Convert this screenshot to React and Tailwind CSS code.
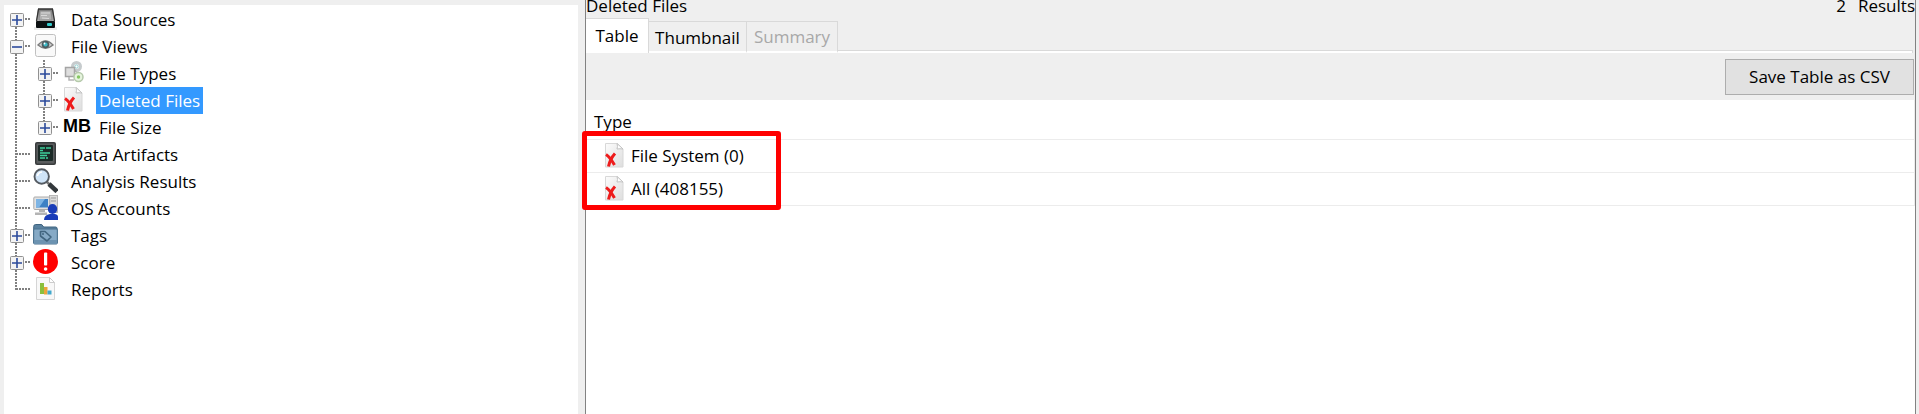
const svgProps = { width: 25, height: 25, viewBox: '0 0 25 25', 'aria-hidden': true, className: 'block shrink-0' };

function DriveIcon() {
  return (
    <svg {...svgProps}>
      <defs>
        <linearGradient id="drive" x1="0" y1="0" x2="0" y2="1">
          <stop offset="0" stopColor="#777" />
          <stop offset="1" stopColor="#b4b4b4" />
        </linearGradient>
      </defs>
      <rect x="1" y="21" width="23" height="3" fill="#ececec" />
      <path d="M5 3h15l2 13H3z" fill="url(#drive)" />
      <path d="M7 5h11l1 9H6z" fill="#b0b0b0" stroke="#808080" strokeWidth=".6" />
      <path d="M8 7h9M8 9.500h6M9 12l7 .5" stroke="#dedede" strokeWidth=".9" fill="none" />
      <path d="M5.500 3L3.500 15M19.500 3l2 12M5 3h15" stroke="#333" strokeWidth="1.300" fill="none" />
      <rect x="3" y="15" width="19" height="7" rx="1" fill="#0c1012" />
      <rect x="14" y="17" width="5" height="3" rx="1" fill="#3cc" />
    </svg>
  );
}

function EyeIcon() {
  return (
    <svg {...svgProps}>
      <rect x="2.500" y="1.500" width="20" height="22" rx="2" fill="#f9f9f9" stroke="#c0c0c0" />
      <path d="M5 12Q12.500 4 20 12Q12.500 18.500 5 12z" fill="#d0d0d0" stroke="#7c7c7c" strokeWidth="1.400" />
      <circle cx="12.500" cy="11.500" r="3.800" fill="#4d5c60" />
      <circle cx="12.500" cy="11.500" r="2.100" fill="#3bb8c6" />
      <circle cx="11.500" cy="10.500" r=".9" fill="#fff" />
    </svg>
  );
}

function TypesIcon() {
  return (
    <svg {...svgProps}>
      <circle cx="15.500" cy="6.500" r="4" fill="#f2f5f6" stroke="#c6cbcd" strokeWidth="3" />
      <circle cx="15.500" cy="6.500" r="1.600" fill="#fff" stroke="#8cc" strokeWidth=".9" />
      <path d="M12.500 9.500L18 14" stroke="#b5b5b5" strokeWidth="1.500" />
      <rect x="4.500" y="7.500" width="9" height="9" fill="#dedede" stroke="#a5a5a5" strokeWidth="1.500" />
      <path d="M8 17v3h5" fill="none" stroke="#b5b5b5" strokeWidth="1.500" />
      <circle cx="17.500" cy="17" r="4.500" fill="#e6f4de" stroke="#b5c9ab" strokeWidth="1.500" />
      <circle cx="17.500" cy="17" r="1.700" fill="#86c763" />
    </svg>
  );
}

function DeletedIcon() {
  return (
    <svg {...svgProps}>
      <defs>
        <linearGradient id="page" x1="0" y1="0" x2="1" y2="1">
          <stop offset="0" stopColor="#fcfcfc" />
          <stop offset="1" stopColor="#dedede" />
        </linearGradient>
      </defs>
      <path d="M3.500 .5h12l5.500 5.500v18h-17.500z" fill="url(#page)" stroke="#d8d8d8" />
      <path d="M15 .5q1 3 0 5.500q3-.5 6 0z" fill="#fff" stroke="#c2c2c2" />
      <path d="M4 11.500Q8 14 12.500 22" fill="none" stroke="#ee1c1c" strokeWidth="3" />
      <path d="M13 10.500Q8 16 6.500 23.500" fill="none" stroke="#ee1c1c" strokeWidth="3" />
    </svg>
  );
}

function ArtifactIcon() {
  return (
    <svg {...svgProps}>
      <rect x="2" y="1" width="21" height="23" rx="2" fill="#3a3d3e" />
      <rect x="3.500" y="2.500" width="18" height="20" rx="1" fill="#5a5d5e" />
      <rect x="5" y="4" width="15" height="16" rx="1" fill="#1b2a27" />
      <path d="M7 7h5M13 7h5M7 9.500h3M7 12h10M7 14.500h7M7 17h5M13 17h2" stroke="#3fcf9c" strokeWidth="1.600" />
    </svg>
  );
}

function SearchIcon() {
  return (
    <svg {...svgProps}>
      <path d="M13.500 13.500l3 3" stroke="#777" strokeWidth="2.500" />
      <path d="M16 16l8 7.500" stroke="#33383c" strokeWidth="4.500" />
      <circle cx="8.700" cy="8.500" r="7.200" fill="#cfe4f8" stroke="#555b62" strokeWidth="1.900" />
      <path d="M4.500 8Q5 4.500 9 4" stroke="#fff" strokeWidth="1.600" fill="none" />
    </svg>
  );
}

function AccountIcon() {
  return (
    <svg {...svgProps}>
      <rect x="16.500" y=".5" width="8" height="17" fill="#dcdcdc" stroke="#aaa" strokeWidth=".8" />
      <path d="M18 3h5M18 6h5" stroke="#999" />
      <rect x=".8" y="2" width="16" height="12.500" rx="1" fill="#e2e2e2" stroke="#aaa" />
      <rect x="3" y="4" width="12" height="8.500" fill="#3c80c4" />
      <path d="M3 4h9l-6 8.500H3z" fill="#7db4e4" />
      <path d="M6 15h6v2H6zM2 17.500h12v2.500H2z" fill="#b4b4b4" />
      <ellipse cx="19.500" cy="14" rx="4.700" ry="5" fill="#1a3db8" />
      <path d="M11 25q0-5 6-6h5q3 .5 3 3v3z" fill="#1a3db8" />
    </svg>
  );
}

function TagIcon() {
  return (
    <svg {...svgProps}>
      <path d="M.7 4.500q0-2 2-2h6l2 2.500h12q1.500 0 1.500 2v14H.7z" fill="#5a819f" stroke="#3f6480" />
      <rect x=".7" y="7" width="23.600" height="15" rx="1" fill="#86aac6" stroke="#4a718e" />
      <path d="M1 18h23v4H1z" fill="#6c93b1" />
      <path d="M7.500 9.500h4.500l6 5.500-4 4-6.500-5z" fill="none" stroke="#41657f" strokeWidth="1.600" strokeLinejoin="round" />
      <circle cx="10" cy="12" r="1" fill="#41657f" />
    </svg>
  );
}

function ScoreIcon() {
  return (
    <svg {...svgProps}>
      <circle cx="12.500" cy="12.500" r="12.500" fill="#f00" />
      <rect x="11" y="3.500" width="3.200" height="13" rx=".8" fill="#fff" />
      <circle cx="12.600" cy="20" r="1.800" fill="#fff" />
    </svg>
  );
}

function ReportIcon() {
  return (
    <svg {...svgProps}>
      <path d="M3.500 1.500h13l5 5v17h-18z" fill="#f8f8f8" stroke="#d5d5d5" />
      <path d="M16.500 1.500v5h5z" fill="#fff" stroke="#ccc" />
      <rect x="7" y="7" width="4" height="11" fill="#8bbf3c" />
      <rect x="11" y="11" width="3.500" height="7.500" fill="#eba43a" />
      <rect x="14.500" y="14.500" width="4" height="4" fill="#42a8cc" />
    </svg>
  );
}

function SizeIcon() {
  return <span className="pl-[2px] font-['Liberation_Sans',sans-serif] text-[18px] font-bold leading-6">MB</span>;
}

/* Dotted branch lines; `up`, `down` and `arm` choose the segments. */
function Branch({ up, down, arm }) {
  const line = { stroke: '#808080', strokeWidth: 2, strokeDasharray: '2 1' };
  return (
    <svg width="28" height="27" viewBox="0 0 28 27" aria-hidden className="col-start-1 row-start-1 block">
      {up && <path d="M12 0V14" {...line} />}
      {down && <path d="M12 15V27" {...line} />}
      {arm && <path d="M12 13H26" {...line} />}
    </svg>
  );
}

function Gutter({ up, down, arm = true, toggle, label }) {
  return (
    <span className="grid w-7 shrink-0 items-center">
      <Branch up={up} down={down} arm={arm} />
      {toggle && (
        <button
          type="button"
          aria-label={`${toggle === 'minus' ? 'Collapse' : 'Expand'} ${label}`}
          className="z-10 col-start-1 row-start-1 ml-[6px] size-[14px]"
        >
          <svg width="14" height="14" viewBox="0 0 14 14" aria-hidden className="block">
            <rect x=".5" y=".5" width="13" height="13" rx="1" fill="#f3f3f3" stroke="#919191" />
            <path d={toggle === 'minus' ? 'M2 7h10' : 'M2 7h10M7 2v10'} stroke="#2b4a9b" strokeWidth="1.600" />
          </svg>
        </button>
      )}
    </span>
  );
}

const items = [
  { label: 'Data Sources', Icon: DriveIcon, toggle: 'plus', down: true },
  {
    label: 'File Views', Icon: EyeIcon, toggle: 'minus', up: true, down: true,
    children: [
      { label: 'File Types', Icon: TypesIcon, toggle: 'plus', up: true, down: true },
      { label: 'Deleted Files', Icon: DeletedIcon, toggle: 'plus', up: true, down: true, selected: true },
      { label: 'File Size', Icon: SizeIcon, toggle: 'plus', up: true },
    ],
  },
  { label: 'Data Artifacts', Icon: ArtifactIcon, up: true, down: true },
  { label: 'Analysis Results', Icon: SearchIcon, up: true, down: true },
  { label: 'OS Accounts', Icon: AccountIcon, up: true, down: true },
  { label: 'Tags', Icon: TagIcon, toggle: 'plus', up: true, down: true },
  { label: 'Score', Icon: ScoreIcon, toggle: 'plus', up: true, down: true },
  { label: 'Reports', Icon: ReportIcon, up: true },
];

function TreeItem({ item, nested }) {
  const { label, Icon, toggle, up, down, selected, children } = item;
  return (
    <li>
      <div className="flex h-[27px] items-center">
        {nested && <Gutter up down arm={false} />}
        <Gutter up={up} down={down} toggle={toggle} label={label} />
        <span className="flex h-full w-9 shrink-0 items-start pl-px"><Icon /></span>
        <a
          href="#"
          className={selected ? 'bg-[#3399ff] px-[3px] leading-[27px] text-white' : 'px-[3px] leading-[27px]'}
        >
          {label}
        </a>
      </div>
      {children && (
        <ul>
          {children.map((c) => <TreeItem key={c.label} item={c} nested />)}
        </ul>
      )}
    </li>
  );
}

const rows = ['File System (0)', 'All (408155)'];

export default function App() {
  return (
    <div className="flex min-h-screen bg-[#efefef] pl-1 pr-[3px] font-['Open_Sans','Noto_Sans',sans-serif] text-[17px] leading-6 text-black">
      <nav aria-label="Data tree" className="mt-[5px] w-[574px] shrink-0 bg-white pt-px">
        <ul>
          {items.map((i) => <TreeItem key={i.label} item={i} />)}
        </ul>
      </nav>

      <main className="ml-[7px] flex min-w-0 flex-1 flex-col border-x border-[#828282]">
        <header className="-mt-[6px] flex h-6 justify-between">
          <h1>Deleted Files</h1>
          <p className="flex gap-3"><span>2</span><span>Results</span></p>
        </header>

        <div role="tablist" className="flex h-[35px] items-end pr-[2px]">
          <button type="button" role="tab" aria-selected="true" className="h-[35px] w-[63px] border-r border-t border-[#d9d9d9] bg-white">Table</button>
          <button type="button" role="tab" aria-selected="false" className="h-8 w-[98px] border-r border-t border-b-2 border-[#d9d9d9] border-b-white pt-[2px]">Thumbnail</button>
          <button type="button" role="tab" aria-selected="false" disabled className="h-8 w-[91px] border-r border-t border-b-2 border-[#d9d9d9] border-b-white text-[#a8a8a8]">Summary</button>
          <span className="h-[3px] flex-1 border-r border-t border-[#d9d9d9] bg-white" />
        </div>

        <div className="flex h-[47px] items-center justify-end pr-px">
          <button type="button" className="h-9 w-[189px] border border-[#adadad] bg-[#e1e1e1]">Save Table as CSV</button>
        </div>

        <div className="relative flex-1 bg-white">
          <table className="w-full border-collapse">
            <thead>
              <tr className="h-[39px] border-b border-r border-[#ececec]">
                <th scope="col" className="pl-2 pt-[6px] text-left font-normal">Type</th>
              </tr>
            </thead>
            <tbody>
              {rows.map((r) => (
                <tr key={r} className="h-[33px] border-b border-r border-[#ececec]">
                  <td className="pl-4">
                    <span className="flex items-center gap-1"><DeletedIcon />{r}</span>
                  </td>
                </tr>
              ))}
            </tbody>
          </table>
          <div className="pointer-events-none absolute -left-1 top-[31px] h-[79px] w-[199px] rounded-[3px] border-[5px] border-[#ff0000]" />
        </div>
      </main>
    </div>
  );
}
